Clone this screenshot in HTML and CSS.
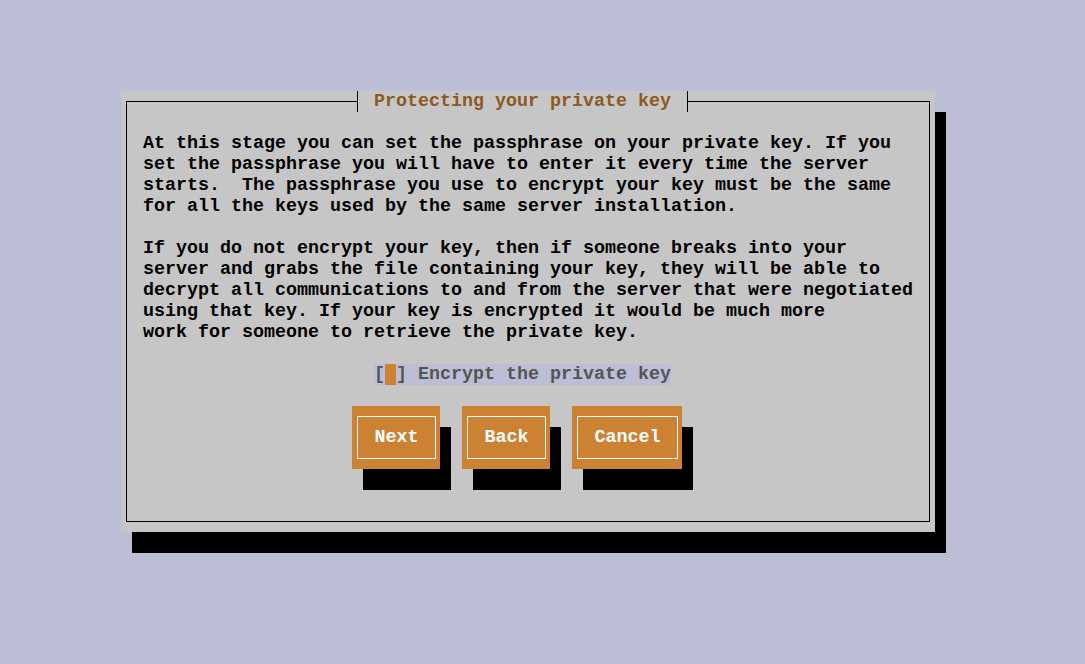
FILE: index.html
```html
<!DOCTYPE html>
<html>
<head>
<meta charset="utf-8">
<link rel="stylesheet" href="styles.css">
</head>
<body>
<div class="screen">
  <div class="dialog">
    <div class="title">Protecting your private key</div>
    <div class="frame">
<pre class="message">At this stage you can set the passphrase on your private key. If you
set the passphrase you will have to enter it every time the server
starts.  The passphrase you use to encrypt your key must be the same
for all the keys used by the same server installation.

If you do not encrypt your key, then if someone breaks into your
server and grabs the file containing your key, they will be able to
decrypt all communications to and from the server that were negotiated
using that key. If your key is encrypted it would be much more
work for someone to retrieve the private key.</pre>
      <div class="check-row">
        <span class="check">[<span class="cursor"> </span>] Encrypt the private key</span>
      </div>
      <div class="buttons">
        <div class="btn btn-short"><div class="btn-inner">Next</div></div>
        <div class="btn btn-short"><div class="btn-inner">Back</div></div>
        <div class="btn btn-long"><div class="btn-inner">Cancel</div></div>
      </div>
    </div>
  </div>
</div>
</body>
</html>
```
FILE: styles.css
```css
html, body {
  margin: 0;
  padding: 0;
}
body {
  background: #bcbed5;
  width: 1085px;
  height: 664px;
  overflow: hidden;
  font-family: "Liberation Mono", "DejaVu Sans Mono", monospace;
  font-weight: bold;
  font-size: 18.33px;
  line-height: 21px;
  color: #000;
}
.screen {
  padding: 91px 0 0 121px;
}
.dialog {
  position: relative;
  width: 814px;
  height: 441px;
  background: #c6c6c6;
  box-shadow: 11px 21px 0 #000;
  box-sizing: border-box;
  padding: 10px 5px;
}
.title {
  position: absolute;
  top: 0;
  left: 236px;
  height: 21px;
  padding: 0 16px;
  background: #c6c6c6;
  border-left: 1px solid #000;
  border-right: 1px solid #000;
  color: #8b5a22;
  white-space: pre;
}
.frame {
  height: 100%;
  box-sizing: border-box;
  border: 1px solid #000;
  padding: 31px 0 0 16px;
}
.message {
  margin: 0;
  font: inherit;
  white-space: pre;
}
.check-row {
  margin-top: 21px;
  padding-left: 231px;
  display: flex;
}
.check {
  background: #bcbed5;
  color: #555;
  white-space: pre;
}
.cursor {
  background: #cd8233;
}
.buttons {
  margin-top: 21px;
  padding-left: 209px;
  display: flex;
  gap: 22px;
}
.btn {
  height: 63px;
  background: #cd8233;
  box-shadow: 11px 21px 0 #000;
  box-sizing: border-box;
  padding: 10px 4px 10px 5px;
  color: #fff;
}
.btn-short { width: 88px; }
.btn-long { width: 110px; }
.btn-inner {
  height: 100%;
  box-sizing: border-box;
  border: 1px solid #fff;
  display: flex;
  align-items: center;
  justify-content: center;
}
```
